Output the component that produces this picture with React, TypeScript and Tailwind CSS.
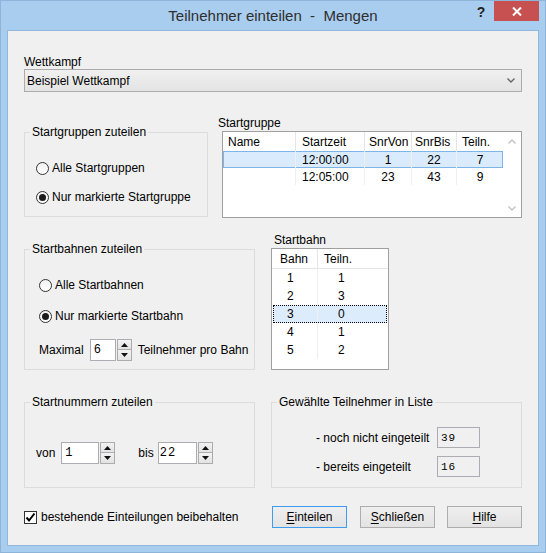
import React from "react";

type Col = { w: string; label: string; body: string; pl: string };

const groupCols = [
    { key: "name", label: "Name", w: "w-[73px]", head: "pl-[5px]" },
    { key: "zeit", label: "Startzeit", w: "w-[69px]", head: "pl-[6px]" },
    { key: "von", label: "SnrVon", w: "w-[47px]", head: "pl-[4px]" },
    { key: "bis", label: "SnrBis", w: "w-[45px]", head: "pl-[3px]" },
    { key: "teiln", label: "Teiln.", w: "w-[46px]", head: "pl-[5px]" },
];

const groupRows = [
    { name: "", zeit: "12:00:00", von: "1", bis: "22", teiln: "7", selected: true },
    { name: "", zeit: "12:05:00", von: "23", bis: "43", teiln: "9", selected: false },
];

const bahnRows = [
    { bahn: "1", teiln: "1" },
    { bahn: "2", teiln: "3" },
    { bahn: "3", teiln: "0", selected: true },
    { bahn: "4", teiln: "1" },
    { bahn: "5", teiln: "2" },
];

const Radio = ({ label, checked }: { label: string, checked?: boolean }) => (
    <div className="flex h-[16px] items-center">
        <span className="flex h-[13px] w-[13px] items-center justify-center rounded-full border border-[#333] bg-gradient-to-b from-[#f1f1f1] to-white">
            {checked && <span className="h-[7px] w-[7px] rounded-full bg-[#1b1b1b]" />}
        </span>
        <span className="ml-[3px]">{label}</span>
    </div>
);

const Spinner = () => (
    <div className="ml-[1px] flex h-full w-[15px] flex-col">
        <div className="flex h-1/2 items-center justify-center border border-[#acacac] bg-gradient-to-b from-[#f2f2f2] to-[#e3e3e3]">
            <svg width="7" height="4" viewBox="0 0 7 4"><path d="M3.5 0 L7 4 L0 4 Z" fill="#111" /></svg>
        </div>
        <div className="flex h-1/2 items-center justify-center border border-t-0 border-[#acacac] bg-gradient-to-b from-[#f2f2f2] to-[#e3e3e3]">
            <svg width="7" height="4" viewBox="0 0 7 4"><path d="M0 0 L7 0 L3.5 4 Z" fill="#111" /></svg>
        </div>
    </div>
);

const NumberBox = ({ value, w, pl }: { value: string, w: string, pl: string }) => (
    <div className="flex h-[22px]">
        <div className={`flex items-center border border-[#abadb3] bg-white font-['Liberation_Mono',monospace] text-[12px] tracking-[1px] ${w} ${pl}`}>
            {value}
        </div>
        <Spinner />
    </div>
);

const Chevron = ({ up, color }: { up?: boolean, color: string }) => (
    <svg width="8" height="5" viewBox="0 0 8 5">
        <path d={up ? "M0.5 4.5 L4 1 L7.5 4.5" : "M0.5 0.5 L4 4 L7.5 0.5"} fill="none" stroke={color} strokeWidth="1.4" />
    </svg>
);

const Button = ({ first, rest, focused }: { first: string, rest: string, focused?: boolean }) => (
    <button
        type="button"
        className={`flex h-[22px] w-[75px] items-center justify-center border bg-gradient-to-b from-[#efefef] to-[#e3e3e3] text-[12px] text-black ${focused ? "border-[#3c9cf0]" : "border-[#adadad]"}`}
    >
        <span className="underline underline-offset-2">{first}</span>{rest}
    </button>
);

const App = () => {
    return (
        <div className="h-[553px] w-[546px] border border-[#8fb4d9] bg-[#a9cdee] px-[6px] pb-[6px] font-['Liberation_Sans',Arial,sans-serif] text-[12px] leading-[14px] text-black">
            {/* title bar */}
            <div className="grid h-[29px] grid-cols-[1fr_auto_1fr]">
                <div />
                <div className="flex items-center whitespace-pre pt-[1px] text-[15px] text-[#2e2e2e]">Teilnehmer einteilen  -  Mengen</div>
                <div className="flex items-start justify-end">
                    <div className="flex h-[21px] w-[26px] items-center justify-center text-[14px] font-bold text-[#222]">?</div>
                    <div className="flex h-[20px] w-[45px] items-center justify-center bg-[#c75050]">
                        <svg width="10" height="9" viewBox="0 0 10 9">
                            <path d="M1 0.5 L9 8.5 M9 0.5 L1 8.5" stroke="#fff" strokeWidth="2" />
                        </svg>
                    </div>
                </div>
            </div>

            {/* client area */}
            <div className="h-[516px] w-[532px] border border-[#92b7dc] bg-[#f0f0f0] px-[16px]">
                <div className="pt-[24px]">Wettkampf</div>
                <div className="flex h-[23px] items-center justify-between border border-[#acacac] bg-gradient-to-b from-[#f0f0f0] to-[#e4e4e4] pl-[2px] pr-[6px]">
                    <span>Beispiel Wettkampf</span>
                    <Chevron color="#666" />
                </div>

                {/* Startgruppen */}
                <div className="mt-[24px] flex items-start">
                    <fieldset className="mt-[9px] h-[92px] w-[184px] border border-[#dcdcdc] pl-[11px]">
                        <legend className="ml-[-6px] px-[2px]">Startgruppen zuteilen</legend>
                        <div className="mt-[21px]"><Radio label="Alle Startgruppen" /></div>
                        <div className="mt-[13px]"><Radio label="Nur markierte Startgruppe" checked /></div>
                    </fieldset>
                    <div className="ml-[10px]">
                        <div>Startgruppe</div>
                        <div className="ml-[4px] mt-[1px] flex h-[87px] w-[300px] border border-[#a0a0a0] bg-white">
                            <div className="flex w-[280px] flex-col">
                                <div className="flex h-[19px]">
                                    {groupCols.map((c, i) => (
                                        <div key={c.key} className={`flex items-center ${c.w} ${c.head} ${i < 4 ? "border-r border-[#e5e5e5]" : ""}`}>{c.label}</div>
                                    ))}
                                </div>
                                {groupRows.map((r, idx) => (
                                    <div key={idx} className={`flex h-[17px] ${r.selected ? "bg-[#d9ebfc] shadow-[inset_0_0_0_1px_#7db5e8]" : ""}`}>
                                        <div className="w-[73px] border-r border-[#f0f0f0]" />
                                        <div className="flex w-[69px] items-center border-r border-[#f0f0f0] pl-[6px]">{r.zeit}</div>
                                        <div className="flex w-[47px] items-center justify-center border-r border-[#f0f0f0]">{r.von}</div>
                                        <div className="flex w-[45px] items-center justify-center border-r border-[#f0f0f0]">{r.bis}</div>
                                        <div className="flex w-[46px] items-center justify-center">{r.teiln}</div>
                                    </div>
                                ))}
                            </div>
                            <div className="flex flex-1 flex-col items-center justify-between pb-[6px] pt-[7px]">
                                <Chevron up color="#c2c2c2" />
                                <Chevron color="#c2c2c2" />
                            </div>
                        </div>
                    </div>
                </div>

                {/* Startbahnen */}
                <div className="mt-[15px] flex items-start">
                    <fieldset className="mt-[9px] h-[128px] w-[231px] border border-[#dcdcdc] pl-[14px]">
                        <legend className="ml-[-9px] px-[2px]">Startbahnen zuteilen</legend>
                        <div className="mt-[21px]"><Radio label="Alle Startbahnen" /></div>
                        <div className="mt-[15px]"><Radio label="Nur markierte Startbahn" checked /></div>
                        <div className="mt-[15px] flex h-[22px] items-center">
                            <span>Maximal</span>
                            <div className="ml-[6px]"><NumberBox value="6" w="w-[26px]" pl="pl-[3px]" /></div>
                            <span className="ml-[6px]">Teilnehmer pro Bahn</span>
                        </div>
                    </fieldset>
                    <div className="ml-[16px]">
                        <div className="ml-[3px]">Startbahn</div>
                        <div className="mt-[1px] h-[122px] w-[118px] border border-[#a0a0a0] bg-white">
                            <div className="flex h-[20px] border-b border-[#e5e5e5]">
                                <div className="flex w-[46px] items-center border-r border-[#e5e5e5] pl-[8px]">Bahn</div>
                                <div className="flex items-center pl-[6px]">Teiln.</div>
                            </div>
                            {bahnRows.map((r) => (
                                <div key={r.bahn} className={`mx-[1px] flex h-[18px] ${r.selected ? "bg-[#dcecfc] outline-1 outline-dotted -outline-offset-1 outline-black" : ""}`}>
                                    <div className="flex w-[45px] items-center border-r border-[#efefef] pl-[14px]">{r.bahn}</div>
                                    <div className="flex items-center pl-[20px]">{r.teiln}</div>
                                </div>
                            ))}
                        </div>
                    </div>
                </div>

                {/* Startnummern / Gewählte */}
                <div className="mt-[25px] flex items-start">
                    <fieldset className="h-[93px] w-[231px] border border-[#dcdcdc] pl-[11px]">
                        <legend className="ml-[-6px] px-[2px]">Startnummern zuteilen</legend>
                        <div className="mt-[33px] flex h-[22px] items-center">
                            <span>von</span>
                            <div className="ml-[6px]"><NumberBox value="1" w="w-[38px]" pl="pl-[3px]" /></div>
                            <span className="ml-[23px]">bis</span>
                            <div className="ml-[4px]"><NumberBox value="22" w="w-[39px]" pl="pl-[1px]" /></div>
                        </div>
                    </fieldset>
                    <fieldset className="ml-[16px] h-[93px] w-[251px] border border-[#dcdcdc] pl-[44px]">
                        <legend className="ml-[-39px] px-[2px]">Gewählte Teilnehmer in Liste</legend>
                        <div className="mt-[18px] flex h-[21px] items-center">
                            <span className="w-[121px]">- noch nicht eingeteilt</span>
                            <div className="flex h-[21px] w-[43px] items-center border border-[#abadb3] bg-[#f0f0f0] pl-[3px] font-['Liberation_Mono',monospace] text-[11px] tracking-[1px]">39</div>
                        </div>
                        <div className="mt-[8px] flex h-[21px] items-center">
                            <span className="w-[121px]">- bereits eingeteilt</span>
                            <div className="flex h-[21px] w-[43px] items-center border border-[#abadb3] bg-[#f0f0f0] pl-[3px] font-['Liberation_Mono',monospace] text-[11px] tracking-[1px]">16</div>
                        </div>
                    </fieldset>
                </div>

                {/* bottom row */}
                <div className="mt-[18px] flex h-[22px] items-center">
                    <span className="flex h-[13px] w-[13px] items-center justify-center border border-[#333] bg-white">
                        <svg width="11" height="11" viewBox="0 0 11 11">
                            <path d="M1.5 5.5 L4 8.5 L9.5 1.5" fill="none" stroke="#000" strokeWidth="2" />
                        </svg>
                    </span>
                    <span className="ml-[4px]">bestehende Einteilungen beibehalten</span>
                    <div className="ml-auto flex">
                        <Button first="E" rest="inteilen" focused />
                        <div className="ml-[13px]"><Button first="S" rest="chließen" /></div>
                        <div className="ml-[12px]"><Button first="H" rest="ilfe" /></div>
                    </div>
                </div>
            </div>
        </div>
    );
};

export default App;
